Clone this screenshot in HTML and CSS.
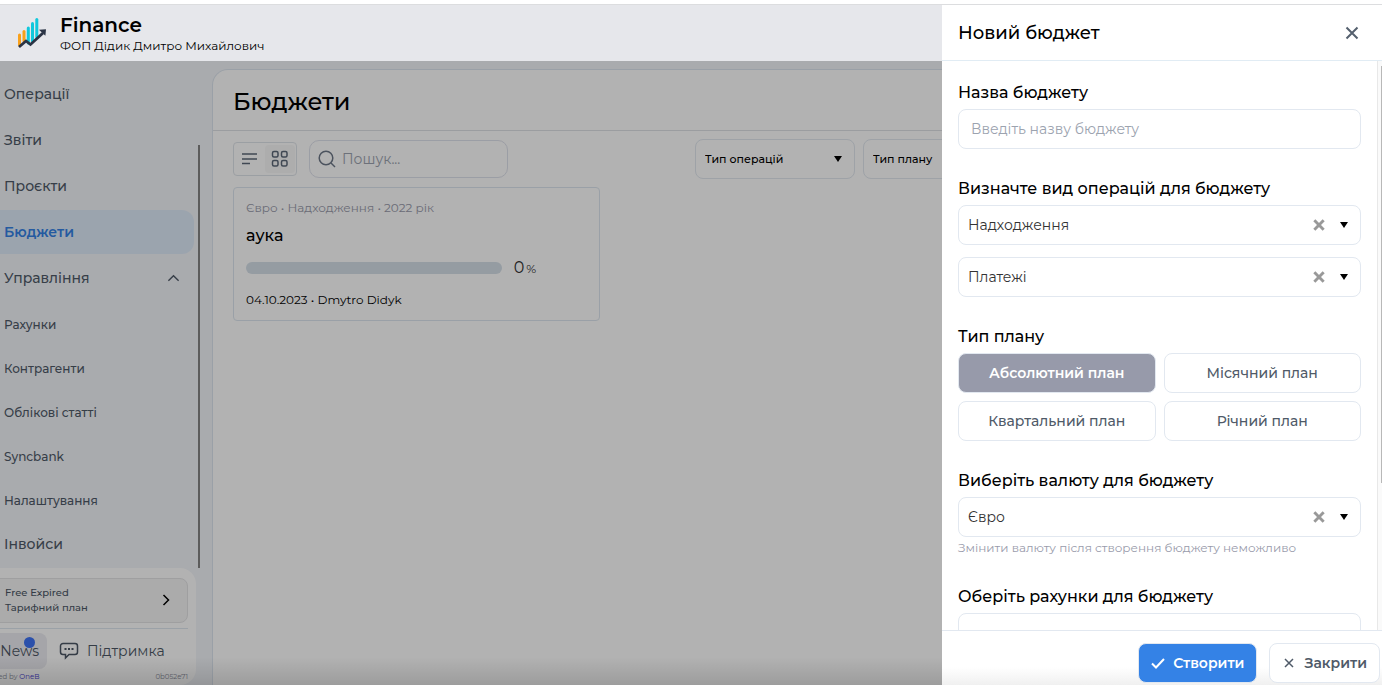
FILE: index.html
```html
<!DOCTYPE html>
<html lang="uk">
<head>
  <meta charset="UTF-8">
  <meta name="viewport" content="width=device-width, initial-scale=1">
  <title>Finance</title>
  <link rel="stylesheet" href="styles.css">
</head>
<body>
  <div class="app">
    <header class="topbar">
      <svg class="logo" viewBox="0 0 32 32">
        <g stroke-width="3" stroke-linecap="round">
          <path d="M3.500 18V28" stroke="#f9a11b"/>
          <path d="M8 14.500V24" stroke="#f9a11b"/>
          <path d="M12.300 11V26" stroke="#10c8dc"/>
          <path d="M16.500 6.500V24" stroke="#10c8dc"/>
          <path d="M20.800 2.500V20" stroke="#10c8dc"/>
        </g>
        <path d="M3 30l7-6 4.500 3.500L27 16" fill="none" stroke="#2b3445" stroke-width="2.800"/>
        <path d="M23 12.800l7-.6-.6 6.600z" fill="#2b3445"/>
      </svg>
      <div class="brand">
        <h1 class="brand-name">Finance</h1>
        <div class="brand-company">ФОП Дідик Дмитро Михайлович</div>
      </div>
    </header>

    <div class="layout">
      <aside class="sidebar">
        <div class="menu-wrap">
          <nav class="menu">
            <a href="#" class="menu-item">Операції</a>
            <a href="#" class="menu-item">Звіти</a>
            <a href="#" class="menu-item">Проєкти</a>
            <a href="#" class="menu-item active">Бюджети</a>
            <a href="#" class="menu-item">Управління
              <svg class="chevron" viewBox="0 0 14 8"><path d="M1.500 7L7 1.500 12.500 7"/></svg>
            </a>
            <a href="#" class="menu-sub">Рахунки</a>
            <a href="#" class="menu-sub">Контрагенти</a>
            <a href="#" class="menu-sub">Облікові статті</a>
            <a href="#" class="menu-sub">Syncbank</a>
            <a href="#" class="menu-sub">Налаштування</a>
            <a href="#" class="menu-item">Інвойси</a>
          </nav>
          <div class="menu-scroll"></div>
        </div>
        <div class="side-bottom">
          <button class="plan">
            <span>Free Expired<br>Тарифний план</span>
            <svg class="plan-arrow" viewBox="0 0 8 12"><path d="M1.500 1l5 5-5 5"/></svg>
          </button>
          <div class="side-links">
            <button class="news">News<span class="dot"></span></button>
            <button class="support">
              <svg class="chat" viewBox="0 0 20 18">
                <path d="M4 1.500h12a2.500 2.500 0 0 1 2.500 2.500v6a2.500 2.500 0 0 1-2.500 2.500H10L6.500 16v-3.500H4A2.500 2.500 0 0 1 1.500 10V4A2.500 2.500 0 0 1 4 1.500z"/>
                <path d="M5.500 7h2M9 7h2M12.500 7h2" stroke-width="2"/>
              </svg>
              Підтримка
            </button>
          </div>
          <div class="side-foot">
            <span class="powered">Powered by <a href="#">OneB</a></span>
            <span>0b052e71</span>
          </div>
        </div>
      </aside>

      <main class="content">
        <h2 class="page-title">Бюджети</h2>
        <div class="toolbar">
          <div class="view-toggle">
            <button class="view-btn" aria-label="Список">
              <svg viewBox="0 0 18 18"><path d="M1 4h15M1 9h15M1 13.500h8"/></svg>
            </button>
            <button class="view-btn selected" aria-label="Плитка">
              <svg viewBox="0 0 18 18">
                <rect x="1.500" y="1.500" width="5.500" height="5.500" rx="1.500"/>
                <rect x="10.500" y="1.500" width="5.500" height="5.500" rx="1.500"/>
                <rect x="1.500" y="10.500" width="5.500" height="5.500" rx="1.500"/>
                <rect x="10.500" y="10.500" width="5.500" height="5.500" rx="1.500"/>
              </svg>
            </button>
          </div>
          <label class="search">
            <svg viewBox="0 0 18 18"><circle cx="8" cy="8" r="6.800"/><path d="M13 13l4 4"/></svg>
            <input type="search" placeholder="Пошук..." aria-label="Пошук">
          </label>
          <div class="filters">
            <div class="filter">
              <select aria-label="Тип операцій"><option>Тип операцій</option></select>
              <svg class="caret" viewBox="0 0 10 8"><path d="M1 1h8L5 7z"/></svg>
            </div>
            <div class="filter">
              <select aria-label="Тип плану"><option>Тип плану</option></select>
              <svg class="caret" viewBox="0 0 10 8"><path d="M1 1h8L5 7z"/></svg>
            </div>
          </div>
        </div>
        <div class="cards">
          <article class="card">
            <div class="card-meta">Євро • Надходження • 2022 рік</div>
            <h3 class="card-title">аука</h3>
            <div class="card-progress">
              <div class="bar"></div>
              <div class="percent">0<small>%</small></div>
            </div>
            <div class="card-date">04.10.2023 • Dmytro Didyk</div>
          </article>
        </div>
      </main>
      <div class="overlay"></div>
    </div>
  </div>

  <section class="drawer">
    <div class="drawer-head">
      <h2 class="drawer-title">Новий бюджет</h2>
      <button class="close" aria-label="Закрити">
        <svg viewBox="0 0 14 14"><path d="M1.500 1.500l11 11M12.500 1.500l-11 11"/></svg>
      </button>
    </div>
    <div class="drawer-body">
      <form class="form" id="budgetForm">
        <div class="group">
          <label class="label" for="name">Назва бюджету</label>
          <input class="field" type="text" id="name" placeholder="Введіть назву бюджету">
        </div>
        <div class="group">
          <label class="label" for="income">Визначте вид операцій для бюджету</label>
          <div class="select">
            <select class="field" id="income"><option>Надходження</option></select>
            <button type="button" class="clear" aria-label="Очистити"><svg viewBox="0 0 12 12"><path d="M2 2l8 8M10 2l-8 8"/></svg></button>
            <svg class="caret" viewBox="0 0 10 8"><path d="M1 1h8L5 7z"/></svg>
          </div>
          <div class="select">
            <select class="field" aria-label="Платежі"><option>Платежі</option></select>
            <button type="button" class="clear" aria-label="Очистити"><svg viewBox="0 0 12 12"><path d="M2 2l8 8M10 2l-8 8"/></svg></button>
            <svg class="caret" viewBox="0 0 10 8"><path d="M1 1h8L5 7z"/></svg>
          </div>
        </div>
        <div class="group">
          <div class="label" id="planLabel">Тип плану</div>
          <div class="plans" role="group" aria-labelledby="planLabel">
            <button type="button" class="plan-btn selected">Абсолютний план</button>
            <button type="button" class="plan-btn">Місячний план</button>
            <button type="button" class="plan-btn">Квартальний план</button>
            <button type="button" class="plan-btn">Річний план</button>
          </div>
        </div>
        <div class="group">
          <label class="label" for="currency">Виберіть валюту для бюджету</label>
          <div class="select">
            <select class="field" id="currency"><option>Євро</option></select>
            <button type="button" class="clear" aria-label="Очистити"><svg viewBox="0 0 12 12"><path d="M2 2l8 8M10 2l-8 8"/></svg></button>
            <svg class="caret" viewBox="0 0 10 8"><path d="M1 1h8L5 7z"/></svg>
          </div>
          <div class="hint">Змінити валюту після створення бюджету неможливо</div>
        </div>
        <div class="group">
          <label class="label" for="accounts">Оберіть рахунки для бюджету</label>
          <select class="field" id="accounts"></select>
        </div>
      </form>
      <div class="rail"><div class="rail-thumb"></div></div>
    </div>
    <div class="drawer-foot">
      <button class="btn primary" type="submit" form="budgetForm">
        <svg viewBox="0 0 14 12"><path d="M1 6.500l4 4 8-8.500"/></svg>
        Створити
      </button>
      <button class="btn">
        <svg class="thin" viewBox="0 0 14 12"><path d="M3 2l8 8M11 2l-8 8"/></svg>
        Закрити
      </button>
    </div>
  </section>
</body>
</html>
```
FILE: styles.css
```css
* {
  box-sizing: border-box;
}
body {
  margin: 0;
  font-family: Montserrat, Inter, "Noto Sans", sans-serif;
  font-size: 14px;
  color: #000;
  background: #fff;
}
h1, h2, h3 {
  margin: 0;
}
button, input, select {
  font-family: inherit;
  color: inherit;
}
button {
  background: none;
  border: none;
  padding: 0;
  cursor: pointer;
}
a {
  color: inherit;
  text-decoration: none;
}
svg {
  display: block;
  fill: none;
  stroke: currentColor;
  stroke-width: 1.5;
  flex: none;
}
.app {
  height: 100vh;
  padding-top: 4px;
  display: flex;
  flex-direction: column;
  overflow: hidden;
}

/* Header */
.topbar {
  flex: none;
  height: 57px;
  padding: 2px 16px 0;
  display: flex;
  align-items: center;
  gap: 12px;
  background: #e6e7eb;
  border-top: 1px solid #dcdddf;
}
.logo {
  width: 32px;
  height: 32px;
  margin-bottom: 2px;
  stroke: none;
}
.brand-name {
  font-size: 20px;
  line-height: 24px;
  font-weight: 600;
}
.brand-company {
  font-size: 12px;
  line-height: 18px;
}

/* Sidebar */
.layout {
  flex: 1;
  min-height: 0;
  display: flex;
  position: relative;
  background: #f3f5fa;
}
.overlay {
  position: absolute;
  inset: 0;
  background: linear-gradient(to top, rgba(0,0,0,0.12), transparent 28px), rgba(0,0,0,0.3);
}
.sidebar {
  flex: none;
  width: 236px;
  margin-left: -24px;
  display: flex;
  flex-direction: column;
}
.menu-wrap {
  flex: 1;
  min-height: 0;
  display: flex;
  gap: 4px;
  padding: 11px 12px 0 0;
}
.menu {
  flex: 1;
  overflow: hidden;
}
.menu-scroll {
  width: 2px;
  margin-top: 73px;
  background: #848484;
}
.menu-item, .menu-sub {
  height: 44px;
  padding: 0 14px 0 28px;
  display: flex;
  align-items: center;
  justify-content: space-between;
  font-weight: 500;
  color: #4f5a68;
}
.menu-item {
  font-size: 14px;
  margin-bottom: 2px;
}
.menu-sub {
  font-size: 12px;
}
.menu-item.active {
  background: #dfebfa;
  color: #3482e6;
  font-weight: 600;
  border-radius: 12px;
}
.chevron {
  width: 13px;
  height: 8px;
}
.side-bottom {
  flex: none;
  width: 220px;
  height: 117px;
  padding: 10px 8px 0 0;
  background: #fff;
  border-radius: 0 16px 16px 0;
  color: #4c5765;
}
.plan {
  width: 100%;
  height: 45px;
  padding: 0 17px 1px 28px;
  display: flex;
  align-items: center;
  justify-content: space-between;
  text-align: left;
  font-size: 10px;
  line-height: 15px;
  font-weight: 500;
  background: #f5f5f5;
  border: 1px solid #e4e4e6;
  border-radius: 8px;
}
.plan-arrow {
  width: 8px;
  height: 12px;
  color: #000;
}
.side-links {
  display: flex;
  gap: 12px;
  margin-top: 5px;
  padding-top: 4px;
  border-top: 1px solid #dfe7ef;
}
.news {
  position: relative;
  width: 71px;
  height: 36px;
  padding-right: 8px;
  text-align: right;
  font-size: 14px;
  background: #ececf2;
  border-radius: 8px;
}
.dot {
  position: absolute;
  top: 4px;
  right: 12px;
  width: 11px;
  height: 11px;
  border-radius: 50%;
  background: #3e73f5;
}
.support {
  display: flex;
  align-items: center;
  gap: 8px;
  font-size: 14px;
}
.chat {
  width: 20px;
  height: 18px;
}
.side-foot {
  display: flex;
  justify-content: space-between;
  font-size: 7px;
  line-height: 16px;
  color: #8b8f9c;
}
.powered {
  width: 63px;
  text-align: right;
  white-space: nowrap;
}
.powered a {
  color: #4b42d0;
}

/* Content */
.content {
  flex: 1;
  min-width: 0;
  margin: 8px 2px 0 0;
  background: #fff;
  border: 1px solid #dde6ef;
  border-bottom: none;
  border-radius: 16px 0 0 0;
}
.page-title {
  padding: 14px 20px 10px;
  font-size: 24px;
  line-height: 36px;
  font-weight: 500;
  border-bottom: 1px solid #dfe1e6;
}
.toolbar {
  display: flex;
  align-items: center;
  gap: 12px;
  padding: 8px 20px;
}
.view-toggle {
  display: flex;
  padding: 2px 1px;
  border: 1px solid #dfe4ea;
  border-radius: 4px;
}
.view-btn {
  width: 30px;
  height: 28px;
  display: flex;
  align-items: center;
  justify-content: center;
  border-radius: 4px;
  color: #5c6878;
}
.view-btn.selected {
  background: #f8f8f8;
}
.view-btn svg {
  width: 18px;
  height: 18px;
}
.search {
  width: 199px;
  height: 38px;
  padding: 0 8px;
  display: flex;
  align-items: center;
  gap: 6px;
  border: 1px solid #dfe2ec;
  border-radius: 10px;
  color: #6d7787;
}
.search svg {
  width: 18px;
  height: 18px;
}
.search input {
  flex: 1;
  min-width: 0;
  padding: 0;
  border: none;
  outline: none;
  background: none;
  font-size: 14px;
}
::placeholder {
  color: #9ca3af;
  opacity: 1;
}
.filters {
  margin-left: auto;
  display: grid;
  grid-template-columns: repeat(4, 160px);
  gap: 8px;
}
.filter, .select {
  display: flex;
  align-items: center;
  height: 40px;
  border: 1px solid #e2e8f0;
  border-radius: 8px;
}
.filter {
  padding-right: 11px;
}
.filter select, .select select {
  flex: 1;
  min-width: 0;
  height: 38px;
  padding: 0 9px;
  appearance: none;
  background: none;
  border: none;
}
.filter select {
  font-size: 11px;
  font-weight: 500;
}
.caret {
  width: 10px;
  height: 8px;
  fill: #000;
  stroke: none;
}
.cards {
  padding: 0 20px;
}
.card {
  width: 367px;
  padding: 12px;
  display: grid;
  gap: 8px;
  border: 1px solid #dde6ef;
  border-radius: 4px;
}
.card-meta {
  font-size: 12px;
  line-height: 16px;
  color: #999bab;
}
.card-title {
  font-size: 16px;
  line-height: 24px;
  font-weight: 500;
}
.card-progress {
  display: flex;
  align-items: center;
  gap: 12px;
}
.bar {
  width: 75%;
  height: 12px;
  border-radius: 6px;
  background: #d6e0e9;
}
.percent {
  display: flex;
  align-items: baseline;
  gap: 2px;
  height: 24px;
  font-size: 16px;
  line-height: 24px;
  color: #333;
}
.percent small {
  font-size: 12px;
}
.card-date {
  margin-top: 4px;
  font-size: 12px;
  line-height: 16px;
}

/* Drawer */
.drawer {
  position: fixed;
  top: 5px;
  right: 0;
  bottom: 0;
  width: 440px;
  display: flex;
  flex-direction: column;
  background: #fff;
}
.drawer-head {
  flex: none;
  height: 56px;
  padding: 0 23px 0 16px;
  display: flex;
  align-items: center;
  justify-content: space-between;
  border-bottom: 1px solid #e1ecf4;
}
.drawer-title {
  font-size: 18px;
  font-weight: 500;
}
.close {
  color: #55606e;
}
.close svg {
  width: 14px;
  height: 14px;
  stroke-width: 2;
}
.drawer-body {
  flex: 1;
  min-height: 0;
  display: flex;
  overflow: hidden;
}
.form {
  flex: 1;
  min-width: 0;
  padding: 20px 16px;
}
.group {
  margin-bottom: 28px;
}
.label {
  display: block;
  margin-bottom: 4px;
  font-size: 16px;
  line-height: 24px;
  font-weight: 500;
}
.field {
  font-size: 14px;
}
input.field, #accounts {
  display: block;
  width: 100%;
  height: 40px;
  padding: 0 12px;
  appearance: none;
  background: #fff;
  border: 1px solid #e2e8f0;
  border-radius: 8px;
}
.select {
  padding-right: 11px;
  color: #333;
}
.select + .select {
  margin-top: 12px;
}
.clear {
  margin-right: 13px;
  color: #999;
}
.clear svg {
  width: 14px;
  height: 14px;
  stroke-width: 2.5;
}
.plans {
  display: grid;
  grid-template-columns: 1fr 1fr;
  gap: 8px;
}
.plan-btn {
  height: 40px;
  font-size: 14px;
  font-weight: 500;
  color: #4f5a68;
  border: 1px solid #e2e8f0;
  border-radius: 8px;
}
.plan-btn.selected {
  background: #979aaa;
  color: #fff;
  font-weight: 600;
}
.hint {
  padding-top: 2px;
  font-size: 12px;
  line-height: 18px;
  color: #999bab;
}
.rail {
  flex: none;
  width: 5px;
  padding: 5px 0 0 3px;
  border-left: 1px solid #e8e8e8;
  background: #fafafa;
}
.rail-thumb {
  height: 74%;
  background: #b8b8b8;
}
.drawer-foot {
  flex: none;
  display: flex;
  justify-content: flex-end;
  gap: 12px;
  padding: 12px 2px 2px;
  border-top: 1px solid #e2e8f0;
  background: linear-gradient(to top, #f0f0f0, #fff 18px);
}
.btn {
  height: 40px;
  padding: 0 12px;
  display: flex;
  align-items: center;
  gap: 8px;
  font-size: 14px;
  font-weight: 600;
  color: #4f5a68;
  background: #fff;
  border: 1px solid #e2e8f0;
  border-radius: 8px;
}
.btn.primary {
  background: #3482e6;
  color: #fff;
}
.btn svg {
  width: 14px;
  height: 12px;
  stroke-width: 2;
}
.btn svg.thin {
  stroke-width: 1.5;
}
```
